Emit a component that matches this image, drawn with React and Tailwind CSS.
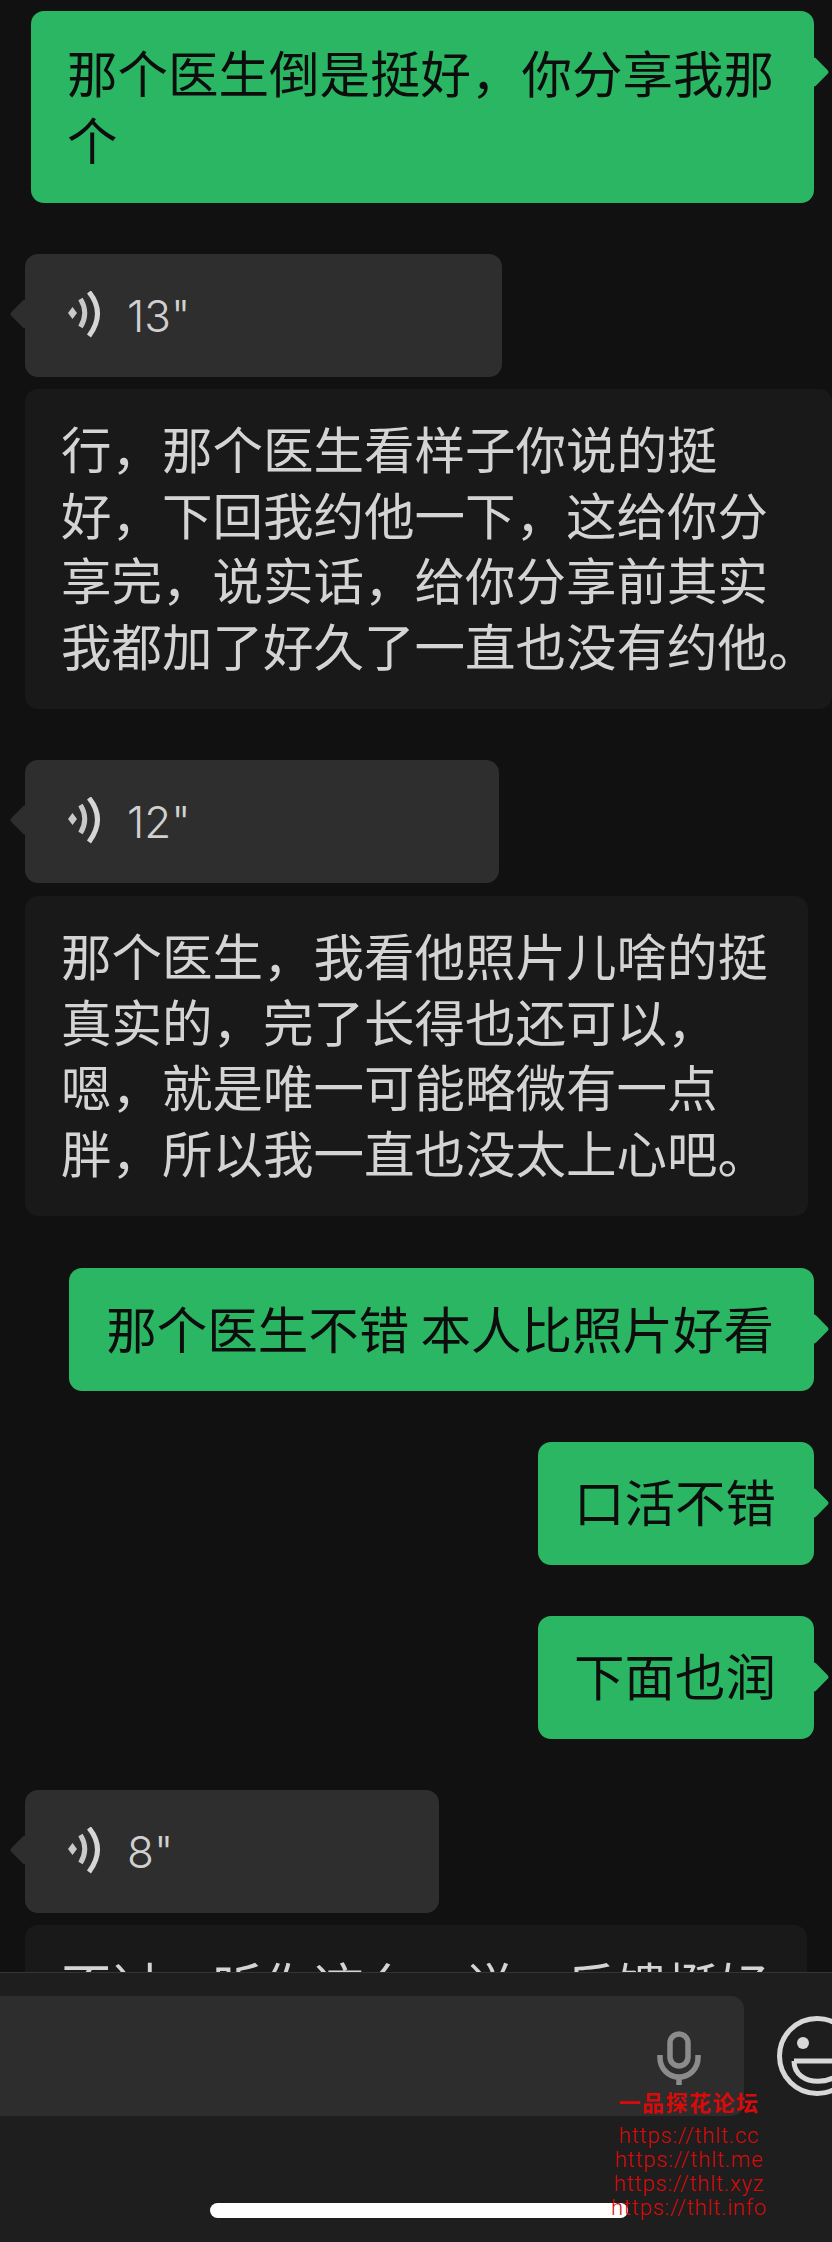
import React from 'react';

const cjk = 'font-["Noto_Sans_CJK_SC","Noto_Sans",sans-serif]';

function VoiceIcon() {
  return (
    <svg width="36" height="50" viewBox="0 0 36 50" fill="none" className="shrink-0">
      <path d="M1 22 L5.5 16 L10 22 L5.5 28 Z" fill="#c9c9c9" />
      <path d="M13.5 8 Q22 22 13.5 36" stroke="#c9c9c9" strokeWidth="5" />
      <path d="M22 1 Q39 22 22 45" stroke="#d6d6d6" strokeWidth="5" />
    </svg>
  );
}

function Voice({ seconds, width, className }) {
  return (
    <div className={`relative h-[123px] rounded-[13px] bg-[#2e2e2e] flex items-center ml-[25px] pl-[42px] ${width} ${className}`}>
      <div className="absolute left-[-11px] top-[49px] w-[22px] h-[22px] rotate-45 rounded-[3px] bg-[#2e2e2e]" />
      <div className="relative flex items-center gap-[24px]">
        <VoiceIcon />
        <span className="font-['Inter',sans-serif] font-light text-[44px] leading-none text-[#d0d0d0]">{seconds}"</span>
      </div>
    </div>
  );
}

function Received({ lines, width, className }) {
  return (
    <div className={`ml-[25px] rounded-[13px] bg-[#191919] pl-[36px] pr-[37px] pt-[26px] pb-[32px] text-[50.5px] leading-[65.5px] text-[#d4d4d4] whitespace-nowrap ${width} ${className}`}>
      {lines.map((line) => (
        <div key={line}>{line}</div>
      ))}
    </div>
  );
}

function Sent({ lines, className }) {
  return (
    <div className={`relative self-end mr-[18px] rounded-[13px] bg-[#2ab663] text-[50.5px] leading-[67px] text-[#0d0d0d] whitespace-nowrap ${className}`}>
      <div className="absolute right-[-11px] top-[50px] w-[22px] h-[22px] rotate-45 rounded-[3px] bg-[#2ab663]" />
      <div className="relative">
        {lines.map((line) => (
          <div key={line}>{line}</div>
        ))}
      </div>
    </div>
  );
}

function Mic() {
  return (
    <svg width="44" height="54" viewBox="0 0 44 54" fill="none" stroke="#8b8b8b" strokeWidth="5.5">
      <rect x="13" y="3" width="18" height="32" rx="9" />
      <path d="M3 24 V27 A19 19 0 0 0 41 27 V24" />
      <path d="M22 44 V54" />
    </svg>
  );
}

function Smiley() {
  return (
    <svg width="80" height="80" viewBox="0 0 80 80" fill="none" className="shrink-0">
      <circle cx="40" cy="40" r="37.5" stroke="#d8d8d8" strokeWidth="5" />
      <circle cx="26" cy="27" r="6" fill="#d8d8d8" />
      <circle cx="62" cy="27" r="6" fill="#d8d8d8" />
      <path d="M17 45 H72 M17 45 C17 72 63 72 72 45" stroke="#d8d8d8" strokeWidth="5" />
    </svg>
  );
}

export default function App() {
  return (
    <div className={`relative h-[2242px] w-[832px] overflow-hidden bg-[#111111] flex flex-col ${cjk}`}>
      {/* chat */}
      <div className="flex-1 min-h-0 overflow-hidden flex flex-col pt-[11px]">
        <Sent lines={['那个医生倒是挺好\uFF0C你分享我那', '个']} className="pl-[36px] pt-[27px] pb-[31px] w-[783px] shrink-0" />
        <Voice seconds="13" width="w-[477px]" className="mt-[51px] shrink-0" />
        <Received
          lines={['行\uFF0C那个医生看样子你说的挺', '好\uFF0C下回我约他一下\uFF0C这给你分', '享完\uFF0C说实话\uFF0C给你分享前其实', '我都加了好久了一直也没有约他。']}
          width="w-[807px]"
          className="mt-[12px] shrink-0"
        />
        <Voice seconds="12" width="w-[474px]" className="mt-[51px] shrink-0" />
        <Received
          lines={['那个医生\uFF0C我看他照片儿啥的挺', '真实的\uFF0C完了长得也还可以\uFF0C', '嗯\uFF0C就是唯一可能略微有一点', '胖\uFF0C所以我一直也没太上心吧。']}
          width="w-[783px]"
          className="mt-[13px] shrink-0"
        />
        <Sent lines={['那个医生不错 本人比照片好看']} className="pl-[37px] pr-[40px] pt-[26px] pb-[30px] mt-[52px] shrink-0" />
        <Sent lines={['口活不错']} className="pl-[36px] pr-[38px] pt-[25px] pb-[31px] mt-[51px] shrink-0" />
        <Sent lines={['下面也润']} className="pl-[36px] pr-[38px] pt-[25px] pb-[31px] mt-[51px] shrink-0" />
        <Voice seconds="8" width="w-[414px]" className="mt-[51px] shrink-0" />
        <Received lines={['不过\uFF0C听你这么一说\uFF0C反馈挺好']} width="w-[782px]" className="mt-[12px] shrink-0" />
      </div>

      {/* input bar */}
      <div className="h-[270px] shrink-0 border-t border-[#333333] bg-[#1e1e1e] pt-[23px]">
        <div className="flex gap-[33px]">
          <div className="h-[120px] w-[744px] shrink-0 rounded-r-[13px] bg-[#2d2d2d] flex justify-end pr-[43px] pt-[35px]">
            <Mic />
          </div>
          <div className="pt-[20px]">
            <Smiley />
          </div>
        </div>
        <div className="mt-[87px] ml-[210px] h-[15px] w-[418px] rounded-full bg-white" />
      </div>

      {/* watermark */}
      <div className="absolute left-[589px] top-[2088px] w-[200px] text-center text-[#d80a0a]">
        <div className="text-[22px] font-bold leading-[26px] tracking-[1.5px]">一品探花论坛</div>
        <div className="mt-[10px] font-['Roboto',sans-serif] font-light text-[22px] leading-[24px] tracking-[0.8px]">
          <div>https://thlt.cc</div>
          <div>https://thlt.me</div>
          <div>https://thlt.xyz</div>
          <div>https://thlt.info</div>
        </div>
      </div>
    </div>
  );
}
